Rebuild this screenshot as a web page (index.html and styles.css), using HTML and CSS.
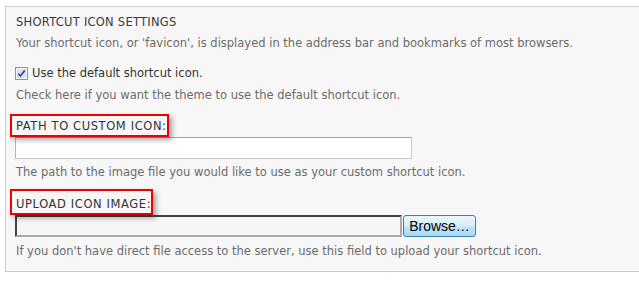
FILE: index.html
```html
<!DOCTYPE html>
<html>
<head>
<meta charset="utf-8">
<link rel="stylesheet" href="styles.css">
</head>
<body>
<div class="panel">
  <div class="heading">SHORTCUT ICON SETTINGS</div>
  <div class="desc d1">Your shortcut icon, or 'favicon', is displayed in the address bar and bookmarks of most browsers.</div>
  <label class="check-row">
    <span class="checkbox"><svg width="13" height="13" viewBox="0 0 13 13"><rect x="0.5" y="0.5" width="12" height="12" fill="#f4f4f6" stroke="#8d96a8"/><rect x="2" y="2" width="9" height="9" fill="#dfe3ea"/><path d="M3.3 6.6 L5.4 9 L9.8 3.4" fill="none" stroke="#3a4d8f" stroke-width="1.7"/></svg></span>
    <span class="check-text">Use the default shortcut icon.</span>
  </label>
  <div class="desc d2">Check here if you want the theme to use the default shortcut icon.</div>
  <div class="label l1"><span class="mark mark-a">PATH TO CUSTOM ICON:</span></div>
  <div class="path-input"></div>
  <div class="desc d3">The path to the image file you would like to use as your custom shortcut icon.</div>
  <div class="label l2"><span class="mark mark-b">UPLOAD ICON IMAGE:</span></div>
  <div class="upload-row">
    <div class="file-input"></div>
    <button class="browse">Browse…</button>
  </div>
  <div class="desc d4">If you don't have direct file access to the server, use this field to upload your shortcut icon.</div>
</div>
</body>
</html>
```

FILE: styles.css
```css
html, body {
  margin: 0;
  padding: 0;
  background: #ffffff;
}
body {
  font-family: "DejaVu Sans", Verdana, sans-serif;
  font-size: 11.5px;
  line-height: 16px;
  color: #333;
}
.panel {
  margin: 6px 0 0 5px;
  height: 266px;
  box-sizing: border-box;
  border: 1px solid #cccccc;
  border-right: none;
  background: #f7f7f7;
  padding: 7px 0 0 10px;
}
.heading {
  color: #3a3a3a;
  letter-spacing: 0.25px;
}
.desc {
  color: #6b6b6b;
}
.d1 { margin-top: 5px; }
.check-row {
  display: flex;
  align-items: center;
  margin-top: 14px;
  height: 16px;
}
.checkbox {
  display: block;
  width: 13px;
  height: 13px;
  margin-left: -1px;
  margin-right: 4px;
}
.checkbox svg { display: block; }
.check-text { color: #333; }
.d2 { margin-top: 6px; }
.label {
  color: #333;
  letter-spacing: 0.6px;
}
.l1 { margin-top: 15px; }
.l2 { margin-top: 16px; }
.mark {
  position: relative;
  display: inline-block;
}
.mark::after {
  content: "";
  position: absolute;
  left: -6px;
  right: -2px;
  border: 2px solid #ee0000;
  box-shadow: 3px 3px 5px rgba(0, 0, 0, 0.35);
}
.mark-a::after { top: -4px; bottom: -3px; }
.mark-b::after { top: -7px; bottom: -3px; }
.path-input {
  margin-top: 3px;
  margin-left: -1px;
  width: 397px;
  height: 22px;
  box-sizing: border-box;
  background: #fff;
  border: 1px solid #c8c8c8;
  border-top-color: #a3a3a3;
  border-left-color: #b5b5b5;
}
.d3 { margin-top: 5px; }
.upload-row {
  display: flex;
  margin-top: 3px;
  margin-left: -1px;
  height: 22px;
}
.file-input {
  width: 387px;
  height: 22px;
  box-sizing: border-box;
  background: #f5f5f5;
  border-top: 2px solid #444;
  border-left: 2px solid #444;
  border-bottom: 2px solid #aaa;
  border-right: 2px solid #aaa;
}
.browse {
  margin-left: 1px;
  width: 73px;
  height: 22px;
  box-sizing: border-box;
  padding: 0;
  border: 1px solid #3c7fb1;
  border-radius: 3px;
  background: linear-gradient(#eaf6fd 0%, #d9f0fc 45%, #bee6fd 55%, #a7d9f5 100%);
  font-family: "Liberation Sans", Arial, sans-serif;
  font-size: 14px;
  color: #000;
  line-height: 20px;
}
.d4 { margin-top: 6px; }
```
